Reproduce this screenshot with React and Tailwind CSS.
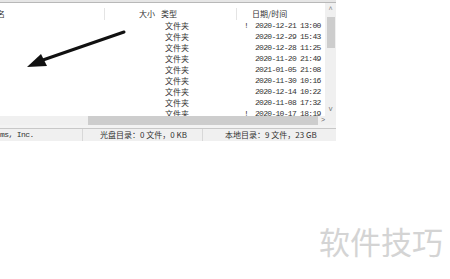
import React from "react";

const rows = [
  ["2020-12-21 13:00", true],
  ["2020-12-29 15:43", false],
  ["2020-12-28 11:25", false],
  ["2020-11-20 21:49", false],
  ["2021-01-05 21:08", false],
  ["2020-11-30 10:16", false],
  ["2020-12-14 10:22", false],
  ["2020-11-08 17:32", false],
  ["2020-10-17 18:19", true],
];

const cjk = { fontFamily: '"Noto Sans CJK SC", "Noto Sans", sans-serif' };
const mono = { fontFamily: '"Liberation Mono", monospace' };

export default function App() {
  return (
    <div className="relative w-[450px] h-[279px] bg-white overflow-hidden text-[#333]">
      <div className="flex flex-col w-[336px]">
        <div className="h-[3px] bg-[#e6e6e6] border-b border-[#b8b8b8]" />
        <div className="flex h-[113px]">
          <div className="flex-1 overflow-hidden flex flex-col">
            <div className="flex h-[17px] shrink-0 text-[8px] leading-[11px] pt-[5px]" style={cjk}>
              <div className="w-[108px] border-r border-[#e4e4e4] -ml-[3px] pl-0">名</div>
              <div className="w-[52px] text-right pr-[2px]">大小</div>
              <div className="w-[80px] pl-[4px] border-r border-[#e4e4e4]">类型</div>
              <div className="pl-[15px]">日期/时间</div>
            </div>
            {rows.map(([d, ex], i) => (
              <div key={i} className="flex h-[11px] shrink-0 text-[8px] leading-[11px]">
                <div className="w-[160px]" />
                <div className="w-[80px] pl-[5px]" style={cjk}>文件夹</div>
                <div className="w-[15px] pl-[4px]" style={mono}>{ex ? "!" : ""}</div>
                <div className="tracking-[-0.7px] whitespace-nowrap" style={mono}>{d}</div>
              </div>
            ))}
          </div>
          <div className="w-[11px] bg-[#f0f0f0] flex flex-col items-center">
            <div className="h-[14px] text-[7px] leading-[14px] text-[#777]" style={mono}>^</div>
            <div className="w-[8px] h-[31px] bg-[#cdcdcd]" />
            <div className="flex-1" />
            <div className="h-[12px] text-[7px] leading-[10px] text-[#777]" style={mono}>v</div>
          </div>
        </div>
        <div className="flex h-[9px] bg-[#f0f0f0] items-stretch">
          <div className="w-[88px]" />
          <div className="w-[230px] bg-[#cdcdcd]" />
          <div className="flex-1 text-[7px] leading-[9px] pl-[3px] text-[#666]" style={mono}>&gt;</div>
        </div>
        <div className="h-[3px] bg-[#f3f3f3]" />
        <div className="flex h-[13px] border-t border-[#c8c8c8] bg-[#f0f0f0] text-[8px] leading-[12px] whitespace-nowrap">
          <div className="w-[83px] border-r border-[#d8d8d8] tracking-[-0.6px]" style={mono}>ms, Inc.</div>
          <div className="w-[120px] border-r border-[#d8d8d8] pl-[17px]" style={cjk}>光盘目录：0 文件，0 KB</div>
          <div className="flex-1 pl-[22px]" style={cjk}>本地目录：9 文件，23 GB</div>
        </div>
      </div>

      <svg className="absolute left-0 top-0" width="450" height="279" viewBox="0 0 450 279">
        <line x1="124" y1="32" x2="40" y2="61" stroke="#111" strokeWidth="3" strokeLinecap="round" />
        <polygon points="27,67 41,54 47,66" fill="#111" />
      </svg>

      <div
        className="absolute left-[319px] top-[225px] text-[31px] leading-none text-[#d4d4d4] whitespace-nowrap"
        style={cjk}
      >
        软件技巧
      </div>
    </div>
  );
}
